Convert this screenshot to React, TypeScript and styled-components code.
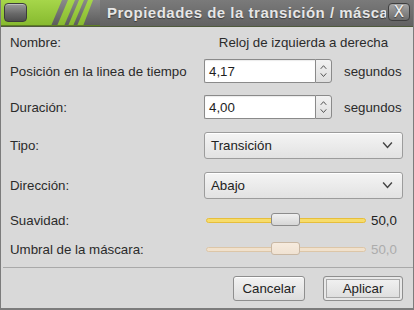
import React from "react";
import styled, { createGlobalStyle } from "styled-components";

const GlobalStyle = createGlobalStyle`
  html, body {
    margin: 0;
    padding: 0;
    background: #d9d9d9;
  }
  body {
    font-family: "Liberation Sans", Arial, sans-serif;
    font-size: 13.3px;
    color: #2b2b2b;
  }
`;

const Window = styled.div`
  width: 414px;
  height: 310px;
  box-sizing: border-box;
  background: #d9d9d9;
  border-left: 1px solid #7c7c7c;
  border-right: 1px solid #7c7c7c;
  border-bottom: 2px solid #7c7c7c;
  display: flex;
  flex-direction: column;
  overflow: hidden;
`;

const TitleBar = styled.div`
  height: 26px;
  flex: none;
  display: flex;
  align-items: stretch;
  background: linear-gradient(#7a7a7a, #626262);
  border-bottom: 1px solid #4f5a3c;
  position: relative;
  margin: 0 -1px;
`;

const Badge = styled.div`
  width: 100px;
  flex: none;
  position: relative;
`;

const MenuButton = styled.div`
  position: absolute;
  left: 4px;
  top: 3px;
  width: 21px;
  height: 17px;
  border-radius: 4px;
  border: 1px solid #3c3c3c;
  background: linear-gradient(#9a9a9a, #6a6a6a 55%, #4e4e4e);
  box-shadow: inset 0 1px 0 rgba(255, 255, 255, 0.35);
`;

const Title = styled.div`
  flex: 1;
  padding-left: 7px;
  line-height: 25px;
  font-weight: bold;
  font-size: 15px;
  color: #e6e6e6;
  white-space: nowrap;
  overflow: hidden;
  text-shadow: 0 1px 1px rgba(0, 0, 0, 0.45);
  letter-spacing: 0.5px;
`;

const CloseButton = styled.div`
  flex: none;
  width: 22px;
  height: 18px;
  margin: 3px 4px 0 2px;
  box-sizing: border-box;
  border-radius: 4px;
  border: 1px solid #3f3f3f;
  background: linear-gradient(#a5a5a5, #6c6c6c);
  color: #f2f2f2;
  font-size: 15px;
  line-height: 16px;
  text-align: center;
  font-family: "DejaVu Sans", sans-serif;
  text-shadow: 0 1px 1px rgba(0, 0, 0, 0.5);
`;

const Form = styled.div`
  display: grid;
  grid-template-columns: 194px 1fr;
  padding: 0 10px 0 9px;
`;

const Label = styled.div<{ $top: number; $h: number }>`
  margin-top: ${(p) => p.$top}px;
  height: ${(p) => p.$h}px;
  display: flex;
  align-items: center;
  white-space: nowrap;
`;

const Field = styled.div<{ $top: number; $h: number; $center?: boolean }>`
  margin-top: ${(p) => p.$top}px;
  height: ${(p) => p.$h}px;
  display: flex;
  align-items: center;
  justify-content: ${(p) => (p.$center ? "center" : "flex-start")};
  white-space: nowrap;
`;

const Spin = styled.div`
  width: 128px;
  height: 24px;
  display: flex;
  box-sizing: border-box;
`;

const SpinText = styled.div`
  flex: 1;
  background: #ffffff;
  border: 1px solid #8a8a8a;
  border-right: none;
  border-radius: 2px 0 0 2px;
  padding-left: 4px;
  display: flex;
  align-items: center;
  color: #1e1e1e;
  box-shadow: inset 0 1px 1px rgba(0, 0, 0, 0.08);
`;

const SpinArrows = styled.div`
  width: 15px;
  border: 1px solid #8a8a8a;
  border-radius: 0 3px 3px 0;
  background: linear-gradient(#f2f2f2, #dedede);
  display: flex;
  flex-direction: column;
  align-items: center;
  justify-content: center;
  gap: 3px;
`;

const Unit = styled.span`
  margin-left: 12px;
`;

const Combo = styled.div`
  width: 199px;
  height: 27px;
  box-sizing: border-box;
  border: 1px solid #9c9c9c;
  border-radius: 3px;
  background: linear-gradient(#f4f4f4, #e2e2e2);
  box-shadow: inset 0 1px 0 #ffffff;
  display: flex;
  align-items: center;
  justify-content: space-between;
  padding: 0 9px 0 6px;
  color: #222;
`;

const Slider = styled.div<{ $disabled?: boolean }>`
  display: flex;
  align-items: center;
  padding-left: 2px;
  gap: 5px;
  color: ${(p) => (p.$disabled ? "#acacac" : "#222")};
`;

const Track = styled.div<{ $disabled?: boolean }>`
  width: 160px;
  height: 5px;
  box-sizing: border-box;
  border-radius: 3px;
  background: ${(p) => (p.$disabled ? "#f1e1cc" : "#f7dc6a")};
  border: 1px solid ${(p) => (p.$disabled ? "#dcc6a8" : "#e6be3c")};
  position: relative;
`;

const Thumb = styled.div<{ $disabled?: boolean }>`
  position: absolute;
  left: 64px;
  top: -6px;
  width: 29px;
  height: 13px;
  box-sizing: border-box;
  border-radius: 3px;
  border: 1px solid ${(p) => (p.$disabled ? "#c9b8a4" : "#8c8c8c")};
  background: ${(p) =>
    p.$disabled
      ? "linear-gradient(#f6ebde, #f0e2d2)"
      : "linear-gradient(#f0f0f0, #d6d6d6)"};
`;

const Separator = styled.div`
  height: 1px;
  background: #a9a9a9;
  margin: 8px 0 0 2px;
`;

const ButtonBar = styled.div`
  display: flex;
  justify-content: flex-end;
  gap: 18px;
  padding: 8px 10px 0 0;
`;

const Button = styled.div<{ $default?: boolean }>`
  width: ${(p) => (p.$default ? 80 : 72)}px;
  height: 25px;
  box-sizing: border-box;
  border: 1px solid #8e8e8e;
  border-radius: 3px;
  background: linear-gradient(#f3f3f3, #dcdcdc);
  box-shadow: ${(p) =>
    p.$default ? "inset 0 0 0 2px #e8e8e8, inset 0 0 0 3px #a8a8a8" : "inset 0 1px 0 #ffffff"};
  display: flex;
  align-items: center;
  justify-content: center;
  color: #222;
`;

const Chevron = ({ up, size = 7 }: { up?: boolean; size?: number }) => (
  <svg width={size} height={size * 0.6} viewBox="0 0 10 6">
    <path
      d={up ? "M1 5.5 L5 1 L9 5.5" : "M1 0.5 L5 5 L9 0.5"}
      fill="none"
      stroke="#444"
      strokeWidth={1.3}
    />
  </svg>
);

const BadgeArt = () => (
  <svg width="100" height="26" viewBox="0 0 100 26" style={{ display: "block" }}>
    <defs>
      <linearGradient id="g" x1="0" y1="0" x2="0" y2="1">
        <stop offset="0" stopColor="#a6d64a" />
        <stop offset="1" stopColor="#86b92e" />
      </linearGradient>
      <linearGradient id="s" x1="0" y1="0" x2="0" y2="1">
        <stop offset="0" stopColor="#8a8a8a" />
        <stop offset="1" stopColor="#5a5a5a" />
      </linearGradient>
    </defs>
    <rect width="100" height="26" fill="url(#g)" />
    <polygon points="93,0 100,0 100,26 83,26" fill="url(#s)" />
    <polygon points="62,0 68,0 57,26 51,26" fill="url(#s)" />
    <polygon points="75,0 79,0 68,26 64,26" fill="url(#s)" />
    <polygon points="84,0 88,0 77,26 73,26" fill="url(#s)" />
    <rect y="25" width="100" height="1" fill="#5e7d25" />
  </svg>
);

const SpinBox = ({ value }: { value: string }) => (
  <Spin>
    <SpinText>{value}</SpinText>
    <SpinArrows>
      <Chevron up />
      <Chevron />
    </SpinArrows>
  </Spin>
);

const App: React.FC = () => {
  return (
    <>
      <GlobalStyle />
      <Window>
        <TitleBar>
          <Badge>
            <BadgeArt />
            <MenuButton />
          </Badge>
          <Title>Propiedades de la transición / máscara</Title>
          <CloseButton>X</CloseButton>
        </TitleBar>
        <Form>
          <Label $top={5} $h={20}>Nombre:</Label>
          <Field $top={5} $h={20} $center>
            Reloj de izquierda a derecha
          </Field>

          <Label $top={7} $h={24}>Posición en la linea de tiempo</Label>
          <Field $top={7} $h={24}>
            <SpinBox value="4,17" />
            <Unit>segundos</Unit>
          </Field>

          <Label $top={12} $h={24}>Duración:</Label>
          <Field $top={12} $h={24}>
            <SpinBox value="4,00" />
            <Unit>segundos</Unit>
          </Field>

          <Label $top={13} $h={27}>Tipo:</Label>
          <Field $top={13} $h={27}>
            <Combo>
              Transición
              <Chevron size={11} />
            </Combo>
          </Field>

          <Label $top={13} $h={27}>Dirección:</Label>
          <Field $top={13} $h={27}>
            <Combo>
              Abajo
              <Chevron size={11} />
            </Combo>
          </Field>

          <Label $top={11} $h={20}>Suavidad:</Label>
          <Field $top={11} $h={20}>
            <Slider>
              <Track>
                <Thumb />
              </Track>
              50,0
            </Slider>
          </Field>

          <Label $top={9} $h={20}>Umbral de la máscara:</Label>
          <Field $top={9} $h={20}>
            <Slider $disabled>
              <Track $disabled>
                <Thumb $disabled />
              </Track>
              50,0
            </Slider>
          </Field>
        </Form>
        <Separator />
        <ButtonBar>
          <Button>Cancelar</Button>
          <Button $default>Aplicar</Button>
        </ButtonBar>
      </Window>
    </>
  );
};

export default App;
